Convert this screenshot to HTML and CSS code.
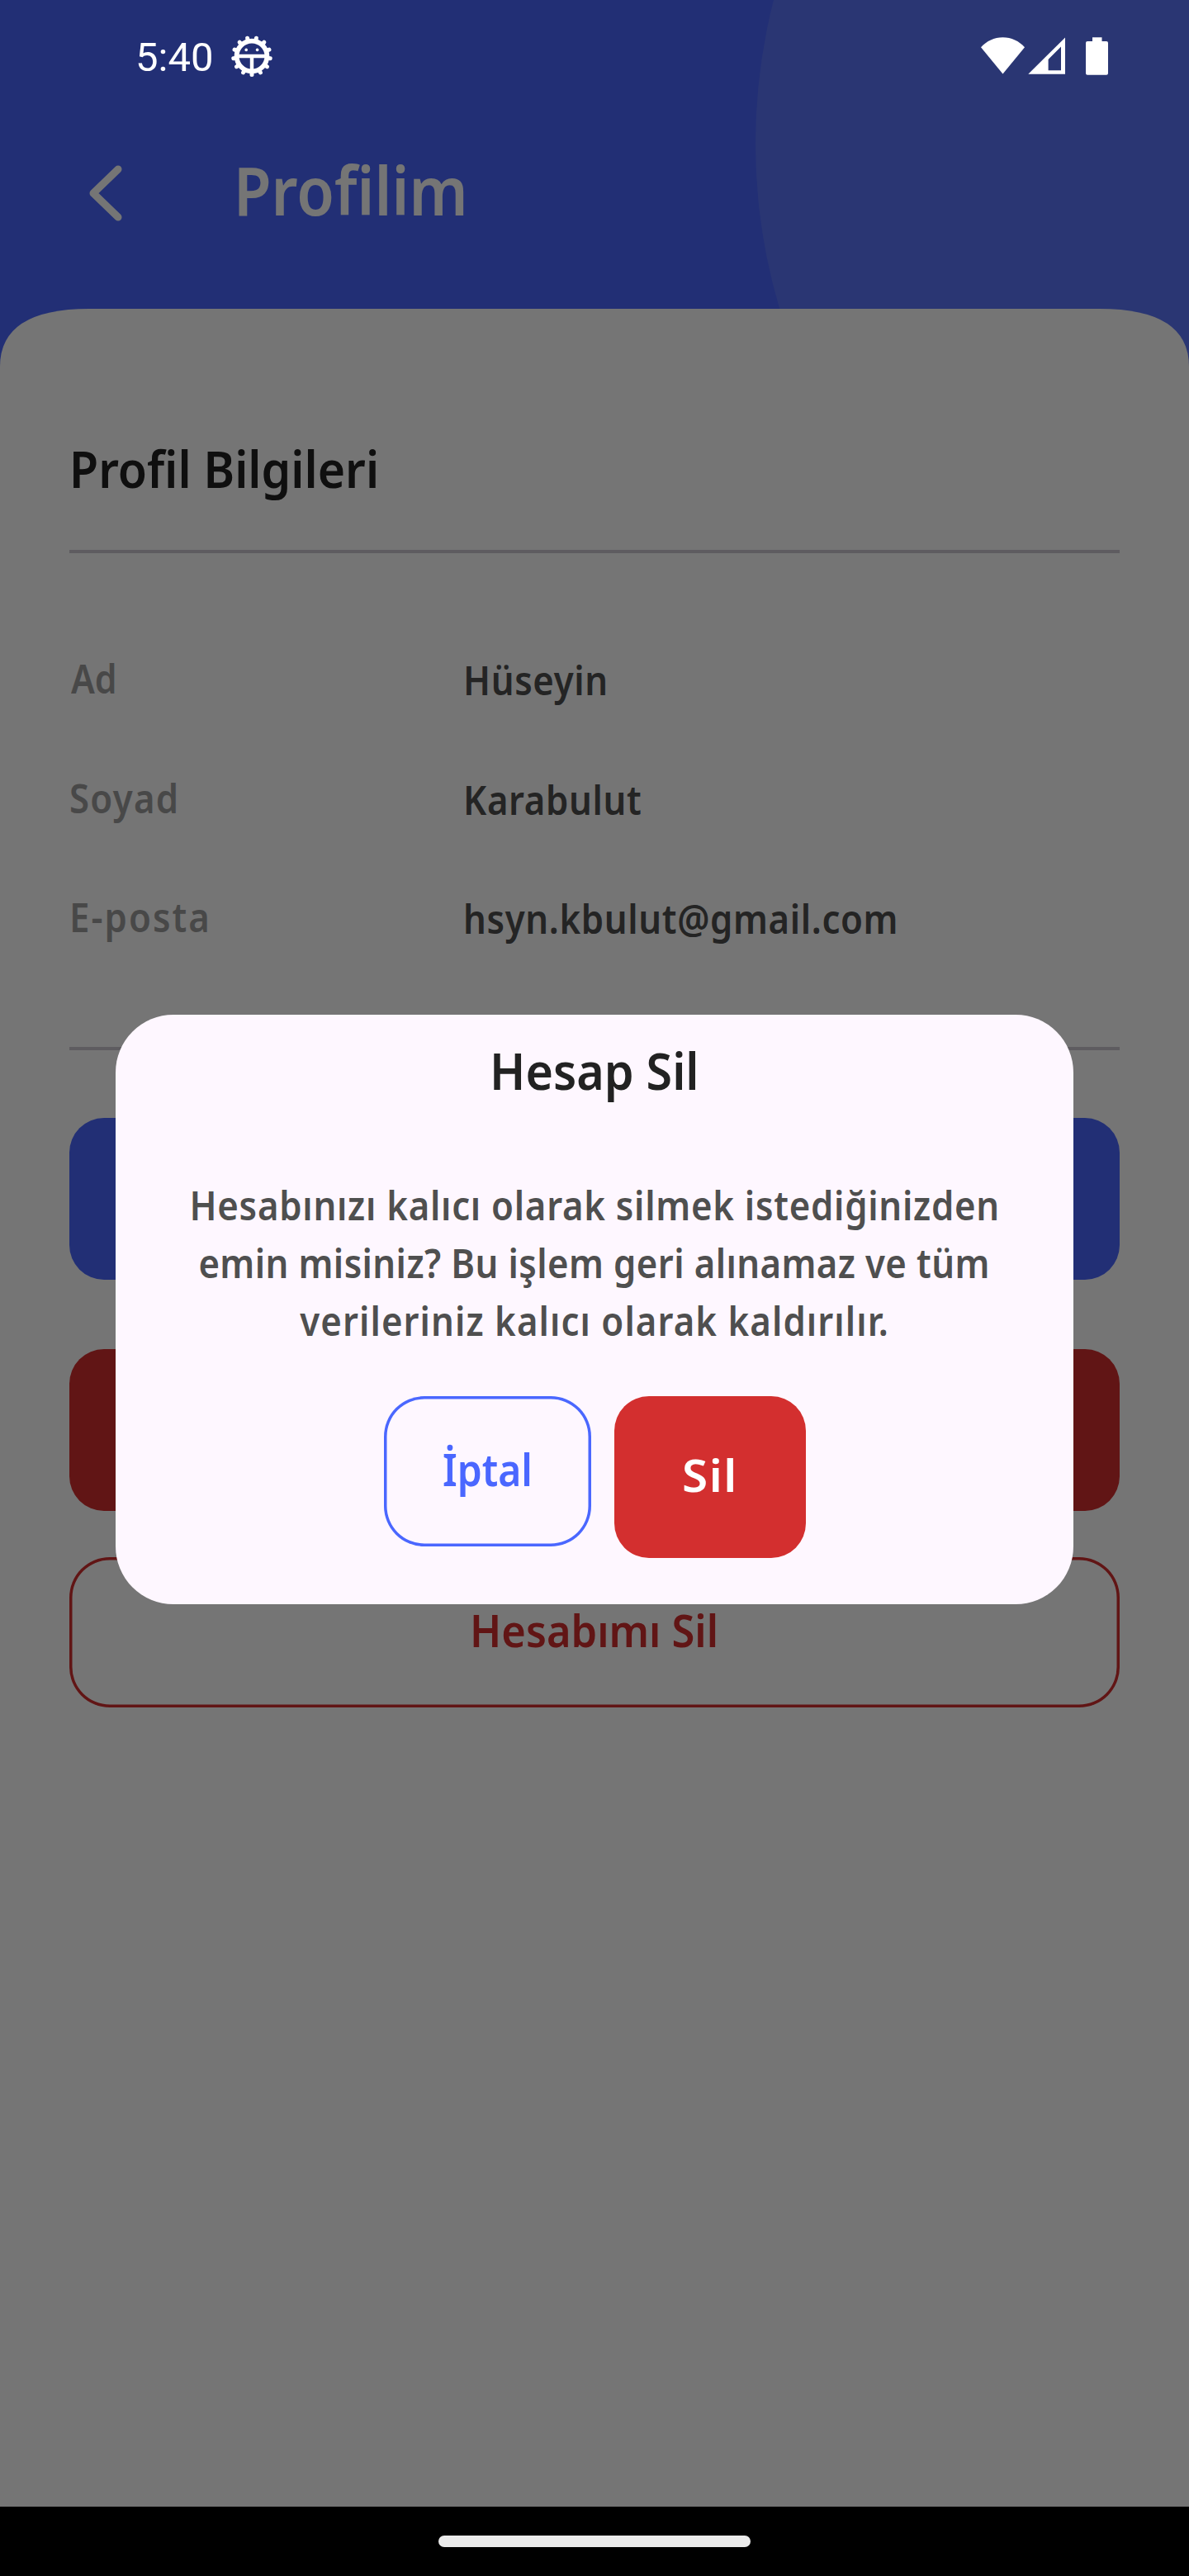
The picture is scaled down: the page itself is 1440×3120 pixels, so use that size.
FILE: index.html
```html
<!DOCTYPE html>
<html lang="tr">
<head>
<meta charset="utf-8">
<title>Profilim</title>
<link rel="stylesheet" href="styles.css">
</head>
<body>
<div class="screen">
  <div class="app">
    <div class="app-circle"></div>
    <header class="header">
      <svg class="back" viewBox="0 0 44 72" width="44" height="72"><path d="M37 7 7 36l30 29" fill="none" stroke="#fff" stroke-width="9" stroke-linecap="round" stroke-linejoin="round"/></svg>
      <h1 class="header-title">Profilim</h1>
    </header>
    <main class="sheet">
      <h2 class="section-title">Profil Bilgileri</h2>
      <div class="divider"></div>
      <dl class="fields">
        <div class="field"><dt><span class="label label-name">Ad</span></dt><dd><span class="value">Hüseyin</span></dd></div>
        <div class="field"><dt><span class="label label-surname">Soyad</span></dt><dd><span class="value">Karabulut</span></dd></div>
        <div class="field"><dt><span class="label label-email">E-posta</span></dt><dd><span class="value">hsyn.kbulut@gmail.com</span></dd></div>
      </dl>
      <div class="divider"></div>
      <div class="actions">
        <div class="button button-primary"></div>
        <div class="button button-danger"></div>
        <div class="button button-outline button-delete"><span class="button-text">Hesabımı Sil</span></div>
      </div>
    </main>
  </div>
  <div class="backdrop">
    <section class="dialog">
      <h2 class="dialog-title"><span>Hesap Sil</span></h2>
      <p class="dialog-body">
        <span class="line line-1">Hesabınızı kalıcı olarak silmek istediğinizden</span>
        <span class="line line-2">emin misiniz? Bu işlem geri alınamaz ve tüm</span>
        <span class="line line-3">verileriniz kalıcı olarak kaldırılır.</span>
      </p>
      <div class="dialog-actions">
        <div class="button button-outline button-cancel"><span class="button-text text-cancel">İptal</span></div>
        <div class="button button-danger button-confirm"><span class="button-text text-confirm">Sil</span></div>
      </div>
    </section>
  </div>
  <div class="status">
    <span class="clock">5:40</span>
    <svg class="gear" viewBox="-26 -26 52 52" width="52" height="52">
      <g stroke="#fff" fill="none">
        <circle r="18.4" stroke-width="5.8"/>
        <g stroke-width="5" stroke-linecap="round">
          <path id="tooth" d="M0 19V22.4"/>
          <use href="#tooth" transform="rotate(27.69)"/><use href="#tooth" transform="rotate(55.38)"/><use href="#tooth" transform="rotate(83.08)"/><use href="#tooth" transform="rotate(110.77)"/><use href="#tooth" transform="rotate(138.46)"/><use href="#tooth" transform="rotate(166.15)"/><use href="#tooth" transform="rotate(193.85)"/><use href="#tooth" transform="rotate(221.54)"/><use href="#tooth" transform="rotate(249.23)"/><use href="#tooth" transform="rotate(276.92)"/><use href="#tooth" transform="rotate(304.62)"/><use href="#tooth" transform="rotate(332.31)"/>
        </g>
        <path d="M-17 0H17M0 0V17" stroke-width="4.4"/>
      </g>
      <circle cx="-6.8" cy="-7.6" r="1.8" fill="#fff"/><circle cx="6.6" cy="-7.6" r="1.8" fill="#fff"/>
    </svg>
    <svg class="signals" viewBox="1188 44 156 48" width="156" height="48" fill="#fff">
      <path d="M1214.5 89.5 1188 57.3C1195 49.5 1204 45.2 1214.5 45.2S1234 49.5 1241 57.3Z"/>
      <path fill-rule="evenodd" d="M1245.3 89.7 1290 45.5V89.7ZM1269.6 85.2H1285V56.5L1269.6 72Z"/>
      <path d="M1323 50V45.2H1334.5V50H1340Q1342 50 1342 52V88.7Q1342 90.7 1340 90.7H1317Q1315 90.7 1315 88.7V52Q1315 50 1317 50Z"/>
    </svg>
  </div>
  <div class="nav"><div class="nav-pill"></div></div>
</div>
</body>
</html>
```
FILE: styles.css
```css
* { box-sizing: border-box; }
body {
  margin: 0;
  background: #000;
  font-family: "Noto Sans", "Open Sans", sans-serif;
  font-weight: 600;
}
h1, h2, p, dl, dd, dt { margin: 0; font-weight: 600; }
svg { display: block; }

.screen {
  position: relative;
  width: 1440px;
  height: 3120px;
  overflow: hidden;
}
.app {
  position: relative;
  height: 3036px;
  overflow: hidden;
  background: #4a67ff;
}
.app-circle {
  position: absolute;
  left: 915px;
  top: -526px;
  width: 1400px;
  height: 1400px;
  border-radius: 50%;
  background: #5d76fa;
}

.header {
  position: relative;
  display: flex;
  align-items: flex-start;
  height: 374px;
  padding: 180px 0 0 106px;
}
.back { margin-top: 18px; }
.header-title {
  margin-left: 133px;
  font-size: 81px;
  line-height: 100px;
  color: #fff;
  transform: scaleX(.915);
  transform-origin: left;
}

.sheet {
  position: relative;
  height: 2662px;
  padding: 154px 84px 0;
  background: #fff;
  clip-path: path("M0 70Q0 0 108 0H1332Q1440 0 1440 70V2662H0Z");
}
.section-title {
  font-size: 61px;
  line-height: 80px;
  color: #222;
  transform: scaleX(.937);
  transform-origin: left;
}
.divider { height: 4px; background: #cdc8d2; }
.section-title + .divider { margin-top: 58px; }
.fields {
  display: flex;
  flex-direction: column;
  gap: 80.5px;
  margin: 120px 0 125px;
}
.field {
  display: grid;
  grid-template-columns: 477px 1fr;
  height: 64px;
  font-size: 48px;
  line-height: 64px;
}
.label, .value {
  display: inline-block;
  transform: scaleX(.91);
  transform-origin: left;
}
.label { color: #9e9e9e; }
.label-name { margin-left: 2px; transform: scaleX(.894); }
.label-surname { letter-spacing: 1.45px; }
.label-email { letter-spacing: 2.28px; }
.field dd { padding-top: 2px; }
.value { color: #4f4f4f; letter-spacing: .7px; }

.actions { display: flex; flex-direction: column; margin-top: 82px; }
.button {
  display: flex;
  align-items: center;
  justify-content: center;
  height: 196px;
  padding-bottom: 8px;
  border-radius: 42px;
  font-size: 55px;
}
.button-primary { background: #4a67ff; }
.button-danger { background: #d32f2f; color: #fff; }
.actions .button-danger { margin-top: 84px; }
.button-outline {
  height: 182px;
  border-radius: 49px;
  box-shadow: inset 0 0 0 3.5px currentColor;
}
.button-delete { margin-top: 56px; color: #d32f2f; }
.button-text { transform: scaleX(.92); }

.backdrop {
  position: absolute;
  inset: 0 0 84px;
  display: flex;
  align-items: flex-start;
  justify-content: center;
  padding-top: 1229px;
  background: rgba(0, 0, 0, .54);
}
.dialog {
  width: 1160px;
  height: 714px;
  padding-top: 28px;
  border-radius: 70px;
  background: #fef7ff;
  text-align: center;
}
.dialog-title { font-size: 61px; line-height: 80px; color: #222; }
.dialog-title span { display: inline-block; transform: scaleX(.94); }
.dialog-body {
  display: flex;
  flex-direction: column;
  align-items: center;
  margin-top: 88px;
  font-size: 48px;
  line-height: 70px;
  color: #4f4f4f;
}
.line { white-space: nowrap; transform: scaleX(.91); }
.line-1 { letter-spacing: .82px; }
.line-2 { letter-spacing: .45px; }
.line-3 { letter-spacing: 1.2px; }
.dialog-actions {
  display: flex;
  align-items: flex-start;
  justify-content: center;
  gap: 28px;
  margin-top: 56px;
}
.button-cancel { width: 251px; color: #4a67ff; }
.button-confirm { width: 232px; }
.text-cancel { transform: scaleX(.873); }
.text-confirm { transform: scaleX(1.03); letter-spacing: 1.5px; }

.status {
  position: absolute;
  inset: 0 0 auto;
  display: flex;
  align-items: flex-start;
  padding: 40px 96px 0 164px;
}
.clock {
  width: 115px;
  font: 400 49px/60px Roboto, sans-serif;
  color: #fff;
}
.gear { margin-top: 2px; }
.signals { margin: 4px 0 0 auto; }

.nav {
  display: flex;
  justify-content: center;
  height: 84px;
  padding-top: 35px;
  background: #000;
}
.nav-pill { width: 378px; height: 14px; border-radius: 7px; background: #ebebeb; }
```
